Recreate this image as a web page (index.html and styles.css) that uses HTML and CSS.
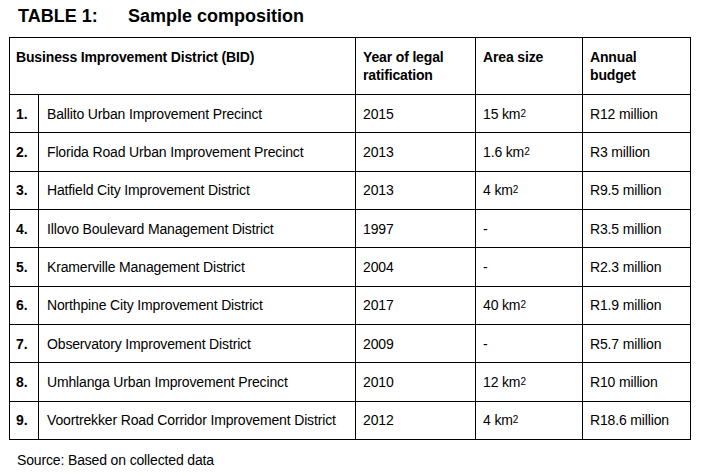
FILE: index.html
```html
<!DOCTYPE html>
<html lang="en">
<head>
<meta charset="utf-8">
<title>Table 1: Sample composition</title>
<link rel="stylesheet" href="styles.css">
</head>
<body>
<div class="page">
  <h1 class="title"><span class="title-num">TABLE 1:</span>Sample composition</h1>
  <div class="grid">
    <div class="cell head span2">Business Improvement District (BID)</div>
    <div class="cell head pad">Year of legal<br>ratification</div>
    <div class="cell head pad">Area size</div>
    <div class="cell head pad">Annual<br>budget</div>

    <div class="cell num">1.</div><div class="cell name">Ballito Urban Improvement Precinct</div><div class="cell pad">2015</div><div class="cell pad">15 km<sup class="sup">2</sup></div><div class="cell pad">R12 million</div>
    <div class="cell num">2.</div><div class="cell name">Florida Road Urban Improvement Precinct</div><div class="cell pad">2013</div><div class="cell pad">1.6 km<sup class="sup">2</sup></div><div class="cell pad">R3 million</div>
    <div class="cell num">3.</div><div class="cell name">Hatfield City Improvement District</div><div class="cell pad">2013</div><div class="cell pad">4 km<sup class="sup">2</sup></div><div class="cell pad">R9.5 million</div>
    <div class="cell num">4.</div><div class="cell name">Illovo Boulevard Management District</div><div class="cell pad">1997</div><div class="cell pad">-</div><div class="cell pad">R3.5 million</div>
    <div class="cell num">5.</div><div class="cell name">Kramerville Management District</div><div class="cell pad">2004</div><div class="cell pad">-</div><div class="cell pad">R2.3 million</div>
    <div class="cell num">6.</div><div class="cell name">Northpine City Improvement District</div><div class="cell pad">2017</div><div class="cell pad">40 km<sup class="sup">2</sup></div><div class="cell pad">R1.9 million</div>
    <div class="cell num">7.</div><div class="cell name">Observatory Improvement District</div><div class="cell pad">2009</div><div class="cell pad">-</div><div class="cell pad">R5.7 million</div>
    <div class="cell num">8.</div><div class="cell name">Umhlanga Urban Improvement Precinct</div><div class="cell pad">2010</div><div class="cell pad">12 km<sup class="sup">2</sup></div><div class="cell pad">R10 million</div>
    <div class="cell num">9.</div><div class="cell name">Voortrekker Road Corridor Improvement District</div><div class="cell pad">2012</div><div class="cell pad">4 km<sup class="sup">2</sup></div><div class="cell pad">R18.6 million</div>
  </div>
  <p class="source">Source: Based on collected data</p>
</div>
</body>
</html>
```

FILE: styles.css
```css
html, body {
  margin: 0;
  padding: 0;
  background: #fff;
}

.page {
  padding: 5px 0 0 9px;
  font-family: "Liberation Sans", Arial, sans-serif;
  color: #000;
}

.title {
  margin: 0 0 9px 9px;
  font-size: 18px;
  line-height: 23px;
  font-weight: bold;
}

.title-num {
  display: inline-block;
  width: 110px;
}

.grid {
  display: grid;
  grid-template-columns: 29px 317px 120px 107px 108px;
  grid-template-rows: 57px repeat(9, 38.33px);
  width: max-content;
  border-left: 1px solid #000;
  border-top: 1px solid #000;
  font-size: 14px;
  line-height: 18px;
  letter-spacing: -0.15px;
}

.cell {
  box-sizing: border-box;
  border-right: 1px solid #000;
  border-bottom: 1px solid #000;
  display: flex;
  align-items: center;
  white-space: nowrap;
}

.head {
  display: block;
  font-weight: bold;
  padding-top: 10px;
}

.span2 {
  grid-column: span 2;
  padding-left: 6px;
}

.pad {
  padding-left: 7px;
}

.num {
  font-weight: bold;
  padding-left: 6px;
}

.name {
  padding-left: 8px;
}

.head.pad {
  padding-left: 7px;
}

.sup {
  font-size: 10px;
  line-height: 0;
  vertical-align: 4.5px;
  letter-spacing: 0;
}

.source {
  margin: 11px 0 0 8px;
  font-size: 14px;
  line-height: 18px;
  letter-spacing: -0.15px;
}
```
